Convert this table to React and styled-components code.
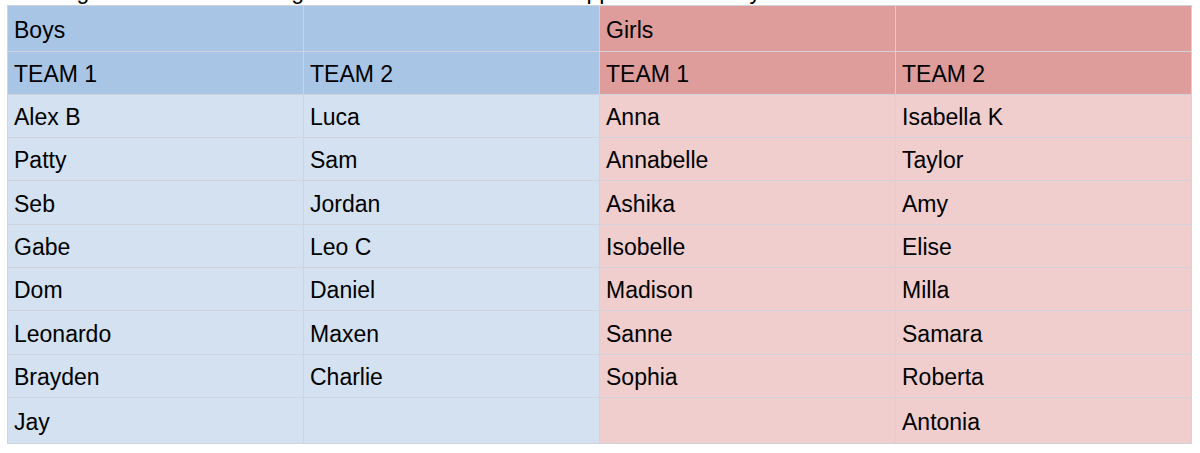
import React from "react";
import styled, { createGlobalStyle } from "styled-components";

const Global = createGlobalStyle`
  html, body { margin: 0; padding: 0; background: #ffffff; }
  body { font-family: "Liberation Sans", Arial, sans-serif; color: #000; }
`;

const Page = styled.div`
  width: 1200px;
  height: 453px;
  overflow: hidden;
  padding-left: 7px;
  box-sizing: border-box;
`;

const Caption = styled.div`
  height: 5px;
  overflow: hidden;
  display: flex;
  font-size: 23px;
  line-height: 23px;
  white-space: nowrap;
`;

const CaptionLine = styled.div`
  margin-top: -20px;
  display: flex;
`;

const Word = styled.span`
  display: inline-block;
  width: ${(p) => p.$w}px;
`;

const Table = styled.table`
  border-collapse: collapse;
  table-layout: fixed;
  width: 1185px;
  font-size: 23px;
`;

const Row = styled.tr`
  height: ${(p) => p.$h}px;
`;

const tones = {
  boysHead: "#a8c5e5",
  boys: "#d4e1f1",
  girlsHead: "#de9c9a",
  girls: "#efcecd",
};

const Cell = styled.td`
  width: 296px;
  box-sizing: border-box;
  padding: 3px 0 0 6px;
  background: ${(p) => tones[p.$tone]};
  border: 1px solid #cfd4dc;
  vertical-align: middle;
  line-height: 1;
  white-space: nowrap;
  overflow: hidden;
`;

const boys1 = ["Alex B", "Patty", "Seb", "Gabe", "Dom", "Leonardo", "Brayden", "Jay"];
const boys2 = ["Luca", "Sam", "Jordan", "Leo C", "Daniel", "Maxen", "Charlie", ""];
const girls1 = ["Anna", "Annabelle", "Ashika", "Isobelle", "Madison", "Sanne", "Sophia", ""];
const girls2 = ["Isabella K", "Taylor", "Amy", "Elise", "Milla", "Samara", "Roberta", "Antonia"];
const heights = [43, 43, 44, 43, 43, 44, 43, 46];

export default function App() {
  return (
    <Page>
      <Global />
      <Caption>
        <CaptionLine>
          <Word $w={214}>Training</Word>
          <Word $w={340}>Morning</Word>
          <Word $w={108}>happen</Word>
          <Word $w={300}>Saturday</Word>
        </CaptionLine>
      </Caption>
      <Table>
        <tbody>
          <Row $h={46}>
            <Cell $tone="boysHead">Boys</Cell>
            <Cell $tone="boysHead"></Cell>
            <Cell $tone="girlsHead">Girls</Cell>
            <Cell $tone="girlsHead"></Cell>
          </Row>
          <Row $h={43}>
            <Cell $tone="boysHead">TEAM 1</Cell>
            <Cell $tone="boysHead">TEAM 2</Cell>
            <Cell $tone="girlsHead">TEAM 1</Cell>
            <Cell $tone="girlsHead">TEAM 2</Cell>
          </Row>
          {heights.map((h, i) => (
            <Row key={i} $h={h}>
              <Cell $tone="boys">{boys1[i]}</Cell>
              <Cell $tone="boys">{boys2[i]}</Cell>
              <Cell $tone="girls">{girls1[i]}</Cell>
              <Cell $tone="girls">{girls2[i]}</Cell>
            </Row>
          ))}
        </tbody>
      </Table>
    </Page>
  );
}
